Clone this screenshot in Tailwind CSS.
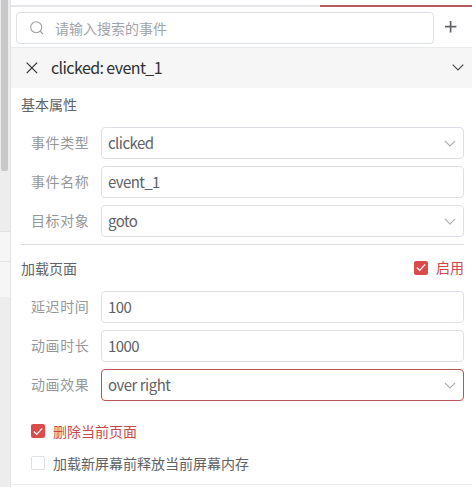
<!DOCTYPE html>
<html lang="zh-CN">
<head>
<meta charset="utf-8">
<title>事件</title>
<script src="https://cdn.jsdelivr.net/npm/@tailwindcss/browser@4"></script>
</head>
<body class="flex h-[487px] w-[472px] overflow-hidden bg-white font-['Noto_Sans_CJK_SC',sans-serif] text-[14px] text-[#606266]">
  <aside class="flex h-full w-[11px] shrink-0 flex-col border-r border-[#e2e2e4] bg-[#ededed]">
    <div class="ml-px h-[171px] w-[7px] rounded-b-[2px] bg-[#c8c8c9]"></div>
    <div class="mt-[60px] h-[31px] border-y border-[#e2e2e2] bg-[#f6f6f6]"></div>
    <div class="h-[35px] bg-[#f6f6f6]"></div>
  </aside>
  <main class="flex min-w-0 flex-1 flex-col">
    <div class="mt-[5px] flex h-[2px]">
      <div class="w-[309px] bg-[#e4e5ec]"></div>
      <div class="flex-1 bg-[#bb5b5b]"></div>
    </div>
    <div class="flex h-10 pt-[5px] pl-[5px]">
      <div class="flex h-8 w-[418px] items-center rounded border border-[#dcdfe6] pl-[13px] text-[#a0a3a9]">
        <svg class="h-[14px] w-[14px]" viewBox="0 0 14 14" fill="none" stroke="#9a9da2" stroke-width="1.1"><circle cx="6.2" cy="6.2" r="5.5"/><path d="M10.2 10.2 13 13"/></svg>
        <span class="ml-[11px] leading-8">请输入搜索的事件</span>
      </div>
      <svg class="mt-[8px] ml-[10px] h-[14px] w-[14px]" viewBox="0 0 14 14" fill="none" stroke="#606266" stroke-width="1.7"><path d="M1 6.6H12.4M6.6 1V12.6"/></svg>
    </div>
    <header class="flex h-[41px] items-center border-t border-[#e9ebee] bg-[#f6f6f6] pr-[8px] pl-[15px] text-[16px] text-[#303133]">
      <svg class="-mt-px h-[12px] w-[12px]" viewBox="0 0 12 12" fill="none" stroke="#303133" stroke-width="1.2"><path d="M.7.7 11.1 11.1M11.1.7.7 11.1"/></svg>
      <span class="-mt-[2px] ml-[13px] flex-1 leading-[38px] tracking-[-0.58px]">clicked: event_1</span>
      <svg class="-mt-px h-[7px] w-[12px]" viewBox="0 0 12 7" fill="none" stroke="#45474a" stroke-width="1.1"><path d="M.7.7 6 5.9 11.3.7"/></svg>
    </header>
    <section class="mr-[8px] ml-[10px] h-[157px] border-b border-[#dcdfe6]">
      <h2 class="h-[39px] leading-[33px]">基本属性</h2>
      <div class="flex flex-col gap-[7px]">
        <div class="flex h-8 items-center"><label class="w-[80px] pb-px pl-[10px] tracking-[0.6px] text-[#959799]">事件类型</label><div class="flex h-8 flex-1 items-center justify-between rounded border border-[#dcdfe6] pr-[7px] pl-[6px] text-[15px] tracking-[-0.55px]"><span>clicked</span><svg class="h-[7px] w-[12px]" viewBox="0 0 12 7" fill="none" stroke="#a8abb2" stroke-width="1.1"><path d="M.9.9 6 5.9 11.1.9"/></svg></div></div>
        <div class="flex h-8 items-center"><label class="w-[80px] pb-px pl-[10px] tracking-[0.6px] text-[#959799]">事件名称</label><div class="flex h-8 flex-1 items-center rounded border border-[#dcdfe6] pl-[6px] text-[15px] tracking-[-0.6px]">event_1</div></div>
        <div class="flex h-8 items-center"><label class="w-[80px] pb-px pl-[10px] tracking-[0.6px] text-[#959799]">目标对象</label><div class="flex h-8 flex-1 items-center justify-between rounded border border-[#dcdfe6] pr-[7px] pl-[6px] text-[15px] tracking-[-0.55px]"><span>goto</span><svg class="h-[7px] w-[12px]" viewBox="0 0 12 7" fill="none" stroke="#a8abb2" stroke-width="1.1"><path d="M.9.9 6 5.9 11.1.9"/></svg></div></div>
      </div>
    </section>
    <section class="mr-[8px] ml-[10px] h-[239px]">
      <div class="flex h-[46px] items-center justify-between pb-px">
        <h2 class="leading-8">加载页面</h2>
        <label class="flex items-center gap-[8px] text-[#c9494b]"><span class="flex h-[14px] w-[14px] items-center justify-center rounded-[2px] bg-[#dc4b4c]"><svg class="h-[9px] w-[10px]" viewBox="0 0 10 9" fill="none" stroke="#fff" stroke-width="1.2"><path d="M.8 4.5 3.7 7.3 9.2 1.4"/></svg></span>启用</label>
      </div>
      <div class="flex flex-col gap-[7px]">
        <div class="flex h-8 items-center"><label class="w-[80px] pb-px pl-[10px] tracking-[0.6px] text-[#959799]">延迟时间</label><div class="flex h-8 flex-1 items-center rounded border border-[#dcdfe6] pl-[6px] text-[15px] tracking-[-0.55px]">100</div></div>
        <div class="flex h-8 items-center"><label class="w-[80px] pb-px pl-[10px] tracking-[0.6px] text-[#959799]">动画时长</label><div class="flex h-8 flex-1 items-center rounded border border-[#dcdfe6] pl-[6px] text-[15px] tracking-[-0.55px]">1000</div></div>
        <div class="flex h-8 items-center"><label class="w-[80px] pb-px pl-[10px] tracking-[0.6px] text-[#959799]">动画效果</label><div class="flex h-8 flex-1 items-center justify-between rounded border border-[#b95555] pr-[7px] pl-[6px] text-[15px] tracking-[-0.5px]"><span>over right</span><svg class="h-[7px] w-[12px]" viewBox="0 0 12 7" fill="none" stroke="#a8abb2" stroke-width="1.1"><path d="M.9.9 6 5.9 11.1.9"/></svg></div></div>
      </div>
      <div class="flex flex-col pt-[14px] pl-[10px]">
        <label class="flex h-8 items-center gap-[8px] text-[#c9494b]"><span class="flex h-[14px] w-[14px] items-center justify-center rounded-[2px] bg-[#dc4b4c]"><svg class="h-[9px] w-[10px]" viewBox="0 0 10 9" fill="none" stroke="#fff" stroke-width="1.2"><path d="M.8 4.5 3.7 7.3 9.2 1.4"/></svg></span>删除当前页面</label>
        <label class="flex h-8 items-center gap-[8px]"><span class="h-[14px] w-[14px] rounded-[2px] border border-[#dcdfe6]"></span>加载新屏幕前释放当前屏幕内存</label>
      </div>
    </section>
    <div class="h-px shrink-0 bg-[#e8e8ea]"></div>
  </main>
</body>
</html>
